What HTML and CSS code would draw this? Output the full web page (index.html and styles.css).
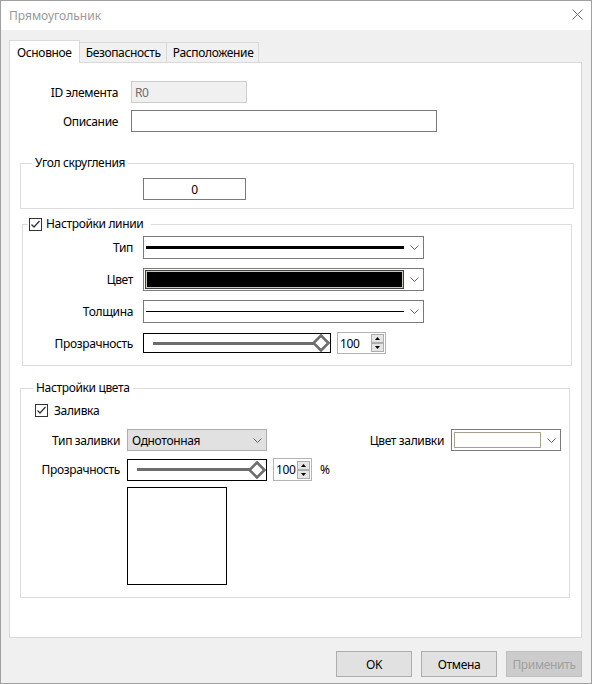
FILE: index.html
```html
<!DOCTYPE html>
<html>

<head>
    <meta charset="UTF-8">
    <title>Прямоугольник</title>
    <link rel="stylesheet" href="styles.css">
</head>

<body>
    <div class="window">
        <div class="titlebar">
            <span class="title">Прямоугольник</span>
            <svg class="close" width="11" height="11" viewBox="0 0 11 11">
                <path d="M0.5 0.5 L10.5 10.5 M10.5 0.5 L0.5 10.5" stroke="#707070" stroke-width="1" fill="none" />
            </svg>
        </div>

        <div class="client">
            <div class="tabs">
                <div class="tab active">Основное</div>
                <div class="tab">Безопасность</div>
                <div class="tab">Расположение</div>
            </div>

            <div class="pane">
                <!-- общие свойства -->
                <div class="ident">
                    <span class="lbl">ID элемента</span>
                    <div class="field readonly id-field">R0</div>
                    <span class="lbl">Описание</span>
                    <div class="field desc-field"></div>
                </div>

                <fieldset class="group corner">
                    <legend>Угол скругления</legend>
                    <div class="field radius-field">0</div>
                </fieldset>

                <fieldset class="group line-group">
                    <legend>
                        <span class="check">
                            <svg width="13" height="13" viewBox="0 0 13 13">
                                <rect x="0.5" y="0.5" width="12" height="12" fill="#fff" stroke="#333" />
                                <path d="M2.5 6.5 L5 9 L10.5 3" stroke="#333" stroke-width="1.3" fill="none" />
                            </svg>
                        </span>
                        Настройки линии
                    </legend>
                    <div class="line-grid">
                        <span class="lbl">Тип</span>
                        <div class="combo">
                            <div class="value"><div class="stroke thick"></div></div>
                            <svg class="chev" width="9" height="5" viewBox="0 0 9 5"><path d="M0.5 0.5 L4.5 4.5 L8.5 0.5" stroke="#606060" fill="none" /></svg>
                        </div>

                        <span class="lbl">Цвет</span>
                        <div class="combo">
                            <div class="value swatch black"></div>
                            <svg class="chev" width="9" height="5" viewBox="0 0 9 5"><path d="M0.5 0.5 L4.5 4.5 L8.5 0.5" stroke="#606060" fill="none" /></svg>
                        </div>

                        <span class="lbl">Толщина</span>
                        <div class="combo">
                            <div class="value"><div class="stroke thin"></div></div>
                            <svg class="chev" width="9" height="5" viewBox="0 0 9 5"><path d="M0.5 0.5 L4.5 4.5 L8.5 0.5" stroke="#606060" fill="none" /></svg>
                        </div>

                        <span class="lbl">Прозрачность</span>
                        <div class="slider-row">
                            <div class="slider wide">
                                <div class="track"></div>
                                <svg class="thumb" width="18" height="18" viewBox="0 0 18 18"><polygon points="9,1.5 16.5,9 9,16.5 1.5,9" fill="#fff" stroke="#6d6d6d" stroke-width="2.6" /></svg>
                            </div>
                            <div class="spin wide">
                                <span class="num">100</span>
                                <div class="spin-btns">
                                    <div class="sbtn"><svg width="5" height="3" viewBox="0 0 5 3"><path d="M0 3 L2.5 0 L5 3 Z" fill="#000" /></svg></div>
                                    <div class="sbtn"><svg width="5" height="3" viewBox="0 0 5 3"><path d="M0 0 L2.5 3 L5 0 Z" fill="#000" /></svg></div>
                                </div>
                            </div>
                        </div>
                    </div>
                </fieldset>

                <fieldset class="group color-group">
                    <legend>Настройки цвета</legend>
                    <div class="fill-check">
                        <span class="check">
                            <svg width="13" height="13" viewBox="0 0 13 13">
                                <rect x="0.5" y="0.5" width="12" height="12" fill="#fff" stroke="#333" />
                                <path d="M2.5 6.5 L5 9 L10.5 3" stroke="#333" stroke-width="1.3" fill="none" />
                            </svg>
                        </span>
                        <span>Заливка</span>
                    </div>

                    <div class="fill-row">
                        <span class="lbl short">Тип заливки</span>
                        <div class="combo button-like">
                            <span class="value text">Однотонная</span>
                            <svg class="chev" width="9" height="5" viewBox="0 0 9 5"><path d="M0.5 0.5 L4.5 4.5 L8.5 0.5" stroke="#606060" fill="none" /></svg>
                        </div>
                        <div class="fill-color">
                            <span class="lbl">Цвет заливки</span>
                            <div class="combo small">
                                <div class="value swatch white"></div>
                                <svg class="chev" width="9" height="5" viewBox="0 0 9 5"><path d="M0.5 0.5 L4.5 4.5 L8.5 0.5" stroke="#606060" fill="none" /></svg>
                            </div>
                        </div>
                    </div>

                    <div class="fill-row opacity">
                        <span class="lbl short">Прозрачность</span>
                        <div class="slider narrow">
                            <div class="track"></div>
                            <svg class="thumb" width="18" height="18" viewBox="0 0 18 18"><polygon points="9,1.5 16.5,9 9,16.5 1.5,9" fill="#fff" stroke="#6d6d6d" stroke-width="2.6" /></svg>
                        </div>
                        <div class="spin narrow">
                            <span class="num">100</span>
                            <div class="spin-btns">
                                <div class="sbtn"><svg width="5" height="3" viewBox="0 0 5 3"><path d="M0 3 L2.5 0 L5 3 Z" fill="#000" /></svg></div>
                                <div class="sbtn"><svg width="5" height="3" viewBox="0 0 5 3"><path d="M0 0 L2.5 3 L5 0 Z" fill="#000" /></svg></div>
                            </div>
                        </div>
                        <span class="pct">%</span>
                    </div>

                    <div class="preview"></div>
                </fieldset>
            </div>

            <div class="footer">
                <button class="btn">OK</button>
                <button class="btn">Отмена</button>
                <button class="btn" disabled>Применить</button>
            </div>
        </div>
    </div>
</body>

</html>
```

FILE: styles.css
```css
body {
    margin: 0;
    font-family: "Noto Sans", "Open Sans", Arial, sans-serif;
    font-size: 12px;
    letter-spacing: -0.35px;
    color: #000;
    background: #fff;
}

.window {
    width: 592px;
    height: 684px;
    box-sizing: border-box;
    border: 1px solid #a0a0a0;
    display: flex;
    flex-direction: column;
    background: #f0f0f0;
}

/* заголовок окна */
.titlebar {
    height: 29px;
    background: #fff;
    display: flex;
    align-items: center;
    padding: 0 8px;
}

.title {
    color: #999;
    flex: 1;
    letter-spacing: 0;
}

.close {
    margin-bottom: 3px;
}

.client {
    flex: 1;
    display: flex;
    flex-direction: column;
    padding: 0 9px 0 8px;
}

/* вкладки */
.tabs {
    display: flex;
    align-items: flex-end;
    margin-top: 10px;
    height: 22px;
}

.tab {
    height: 20px;
    box-sizing: border-box;
    border: 1px solid #d9d9d9;
    border-bottom: none;
    border-left: none;
    padding: 0 5px 0 6px;
    display: flex;
    align-items: center;
    background: #f0f0f0;
}

.tab.active {
    height: 23px;
    margin-bottom: -1px;
    border-left: 1px solid #d9d9d9;
    background: #fff;
    padding: 0 7px;
    position: relative;
    z-index: 1;
}

.pane {
    height: 576px;
    box-sizing: border-box;
    border: 1px solid #d9d9d9;
    background: #fff;
    padding-top: 18px;
}

.lbl {
    text-align: right;
    white-space: nowrap;
}

.field {
    height: 22px;
    box-sizing: border-box;
    border: 1px solid #7a7a7a;
    background: #fff;
    display: flex;
    align-items: center;
    padding-left: 3px;
}

.field.readonly {
    border-color: #cccccc;
    background: #f0f0f0;
    color: #6d6d6d;
}

.ident {
    display: grid;
    grid-template-columns: 108px auto;
    column-gap: 13px;
    row-gap: 7px;
    align-items: center;
    justify-items: start;
}

.ident .lbl {
    justify-self: end;
}

.id-field {
    width: 116px;
}

.desc-field {
    width: 306px;
}

/* рамки групп */
.group {
    border: 1px solid #dcdcdc;
    padding: 0;
    min-width: 0;
}

.group legend {
    line-height: 16px;
    height: 16px;
    padding: 0 3px;
}

.corner {
    margin: 23px 7px 0 10px;
    padding-bottom: 8px;
}

.corner legend {
    margin-left: 11px;
}

.radius-field {
    width: 103px;
    margin: 7px 0 0 122px;
    justify-content: center;
    padding: 0;
}

.line-group {
    margin: 7px 9px 0 12px;
    padding-bottom: 11px;
}

.line-group legend {
    display: flex;
    align-items: center;
    gap: 4px;
    margin-left: 5px;
    padding: 0 8px 0 1px;
}

.check {
    display: flex;
}

.line-grid {
    margin-top: 4px;
    display: grid;
    grid-template-columns: 110px auto;
    column-gap: 10px;
    row-gap: 9px;
    align-items: center;
    justify-items: start;
}

.line-grid .lbl {
    justify-self: end;
}

/* выпадающие списки */
.combo {
    width: 281px;
    height: 23px;
    box-sizing: border-box;
    border: 1px solid #7a7a7a;
    background: #fff;
    display: flex;
    align-items: center;
    padding: 0 4px 0 2px;
}

.combo .value {
    flex: 1;
    display: flex;
    align-items: center;
}

.combo .chev {
    margin-left: 6px;
}

.stroke {
    width: 100%;
    background: #000;
}

.stroke.thick {
    height: 3px;
}

.stroke.thin {
    height: 1px;
}

.swatch {
    height: 19px;
    box-sizing: border-box;
    border: 1px solid #404040;
    box-shadow: inset 0 0 0 1px #cfc8b8;
}

.swatch.black {
    background: #000;
    margin-left: -1px;
}

.swatch.white {
    height: 16px;
    border: 1px solid #a9a18f;
    box-shadow: none;
    background: #fff;
}

.combo.button-like {
    width: 140px;
    height: 22px;
    background: #e1e1e1;
    border-color: #adadad;
    padding-left: 4px;
}

.combo.small {
    width: 110px;
    height: 22px;
    padding-left: 2px;
}

/* ползунки прозрачности */
.slider-row {
    display: flex;
    align-items: center;
    gap: 6px;
}

.slider {
    height: 20px;
    box-sizing: border-box;
    border: 1px solid #000;
    background: #fff;
    display: flex;
    align-items: center;
    padding-left: 9px;
}

.slider.wide {
    width: 188px;
}

.slider.narrow {
    width: 140px;
    height: 22px;
}

.track {
    flex: 1;
    height: 3px;
    background: #6d6d6d;
    margin-right: -2px;
}

.thumb {
    position: relative;
}

.spin {
    height: 22px;
    box-sizing: border-box;
    border: 1px solid #b4b4b4;
    background: #fff;
    display: flex;
    align-items: center;
    padding-left: 2px;
}

.spin.wide {
    width: 49px;
}

.spin.narrow {
    width: 39px;
    height: 23px;
    margin-left: 6px;
}

.spin .num {
    flex: 1;
}

.spin-btns {
    display: flex;
    flex-direction: column;
    margin-right: 1px;
}

.sbtn {
    width: 13px;
    height: 9px;
    box-sizing: border-box;
    border: 1px solid #adadad;
    background: #e5e5e5;
    display: flex;
    align-items: center;
    justify-content: center;
}

/* настройки цвета */
.color-group {
    margin: 14px 11px 0 10px;
    padding-bottom: 12px;
}

.color-group legend {
    margin-left: 12px;
}

.fill-check {
    display: flex;
    align-items: center;
    gap: 6px;
    height: 13px;
    margin: 8px 0 0 14px;
}

.fill-row {
    display: flex;
    align-items: center;
    margin-top: 12px;
    height: 22px;
}

.fill-row.opacity {
    margin-top: 7px;
    height: 23px;
}

.lbl.short {
    width: 99px;
    margin-right: 7px;
}

.fill-color {
    margin-left: auto;
    margin-right: 8px;
    display: flex;
    align-items: center;
    gap: 7px;
}

.pct {
    margin-left: 8px;
}

.preview {
    width: 100px;
    height: 98px;
    box-sizing: border-box;
    border: 1px solid #000;
    margin: 6px 0 0 106px;
}

/* кнопки диалога */
.footer {
    display: flex;
    justify-content: flex-end;
    gap: 9px;
    margin-top: 13px;
    padding-right: 0;
}

.btn {
    width: 76px;
    height: 26px;
    border: 1px solid #adadad;
    background: #e1e1e1;
    font-family: inherit;
    font-size: 12px;
    letter-spacing: -0.35px;
    color: #000;
    padding: 0;
}

.btn:disabled {
    background: #cccccc;
    border-color: #bfbfbf;
    color: #a0a0a0;
}
```
